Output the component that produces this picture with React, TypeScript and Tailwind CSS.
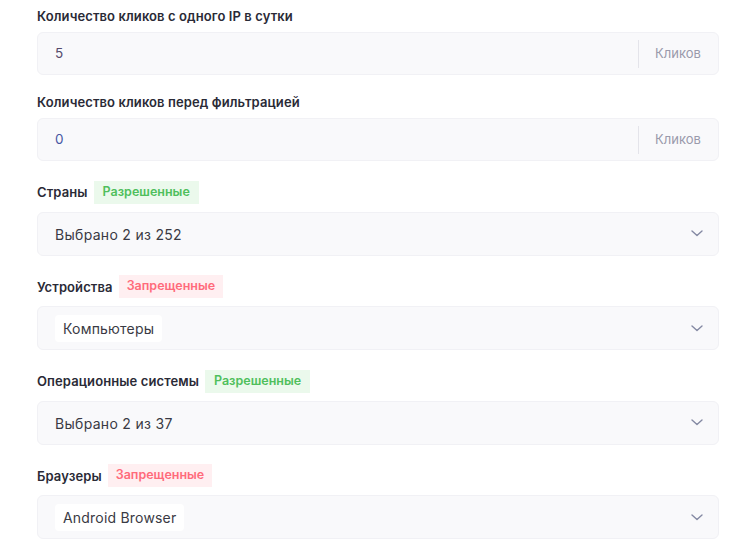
import React from "react";

const font = { fontFamily: "Inter, 'Noto Sans', sans-serif" };

function Chevron() {
  return (
    <svg width="12" height="7" viewBox="0 0 12 7" fill="none">
      <path d="M1 1l5 4.5L11 1" stroke="#8489a3" strokeWidth="1.4" strokeLinecap="round" strokeLinejoin="round" />
    </svg>
  );
}

function Badge({ kind }: { kind: "ok" | "no" }) {
  return kind === "ok" ? (
    <span className="ml-[6px] inline-flex h-[23px] items-center bg-[#ebf9ec] px-[9px] text-[12.5px] font-semibold text-[#4fbf5c]">
      Разрешенные
    </span>
  ) : (
    <span className="ml-[6px] inline-flex h-[23px] items-center bg-[#ffeff1] px-[8px] text-[12.5px] font-semibold text-[#ff6b7b]">
      Запрещенные
    </span>
  );
}

function Label({ text, badge }: { text: string; badge?: "ok" | "no" }) {
  return (
    <div className={`mb-2 flex items-center ${badge ? "h-[23px]" : "h-[16px]"}`}>
      <span className="text-[13px] font-semibold leading-[16px] tracking-[0.1px] text-[#2a2a36]">{text}</span>
      {badge && <Badge kind={badge} />}
    </div>
  );
}

function NumberField({ value, color }: { value: string; color: string }) {
  return (
    <div className="flex h-[43px] items-center rounded-[6px] border border-[#f1f1f5] bg-[#f9f9fb]">
      <span className={`flex-1 pl-[17px] text-[13.5px] ${color}`}>{value}</span>
      <div className="h-[28px] w-px bg-[#e4e4ea]" />
      <span className="w-[79px] pl-[16px] text-[13px] text-[#9a9aab]">Кликов</span>
    </div>
  );
}

function SelectField({ text, chip }: { text: string; chip?: boolean }) {
  return (
    <div className="flex h-[44px] items-center rounded-[6px] border border-[#f1f1f5] bg-[#f9f9fb] pl-[17px] pr-[15px]">
      <div className="flex-1">
        {chip ? (
          <span className="inline-flex h-[27px] items-center rounded-[4px] bg-white px-[8px] text-[14px] tracking-[0.2px] text-[#3a3a44]">
            {text}
          </span>
        ) : (
          <span className="text-[14px] tracking-[0.3px] text-[#3a3a44]">{text}</span>
        )}
      </div>
      <Chevron />
    </div>
  );
}

export default function App() {
  return (
    <div className="h-[556px] w-[739px] bg-white pl-[37px] pr-[20px] pt-[8px]" style={font}>
      <div className="mb-[19px]">
        <Label text="Количество кликов с одного IP в сутки" />
        <NumberField value="5" color="text-[#54496a]" />
      </div>
      <div className="mb-[19.5px]">
        <Label text="Количество кликов перед фильтрацией" />
        <NumberField value="0" color="text-[#4757a3]" />
      </div>
      <div className="mb-[19.5px]">
        <Label text="Страны" badge="ok" />
        <SelectField text="Выбрано 2 из 252" />
      </div>
      <div className="mb-[19.5px]">
        <Label text="Устройства" badge="no" />
        <SelectField text="Компьютеры" chip />
      </div>
      <div className="mb-[19.5px]">
        <Label text="Операционные системы" badge="ok" />
        <SelectField text="Выбрано 2 из 37" />
      </div>
      <div>
        <Label text="Браузеры" badge="no" />
        <SelectField text="Android Browser" chip />
      </div>
    </div>
  );
}
